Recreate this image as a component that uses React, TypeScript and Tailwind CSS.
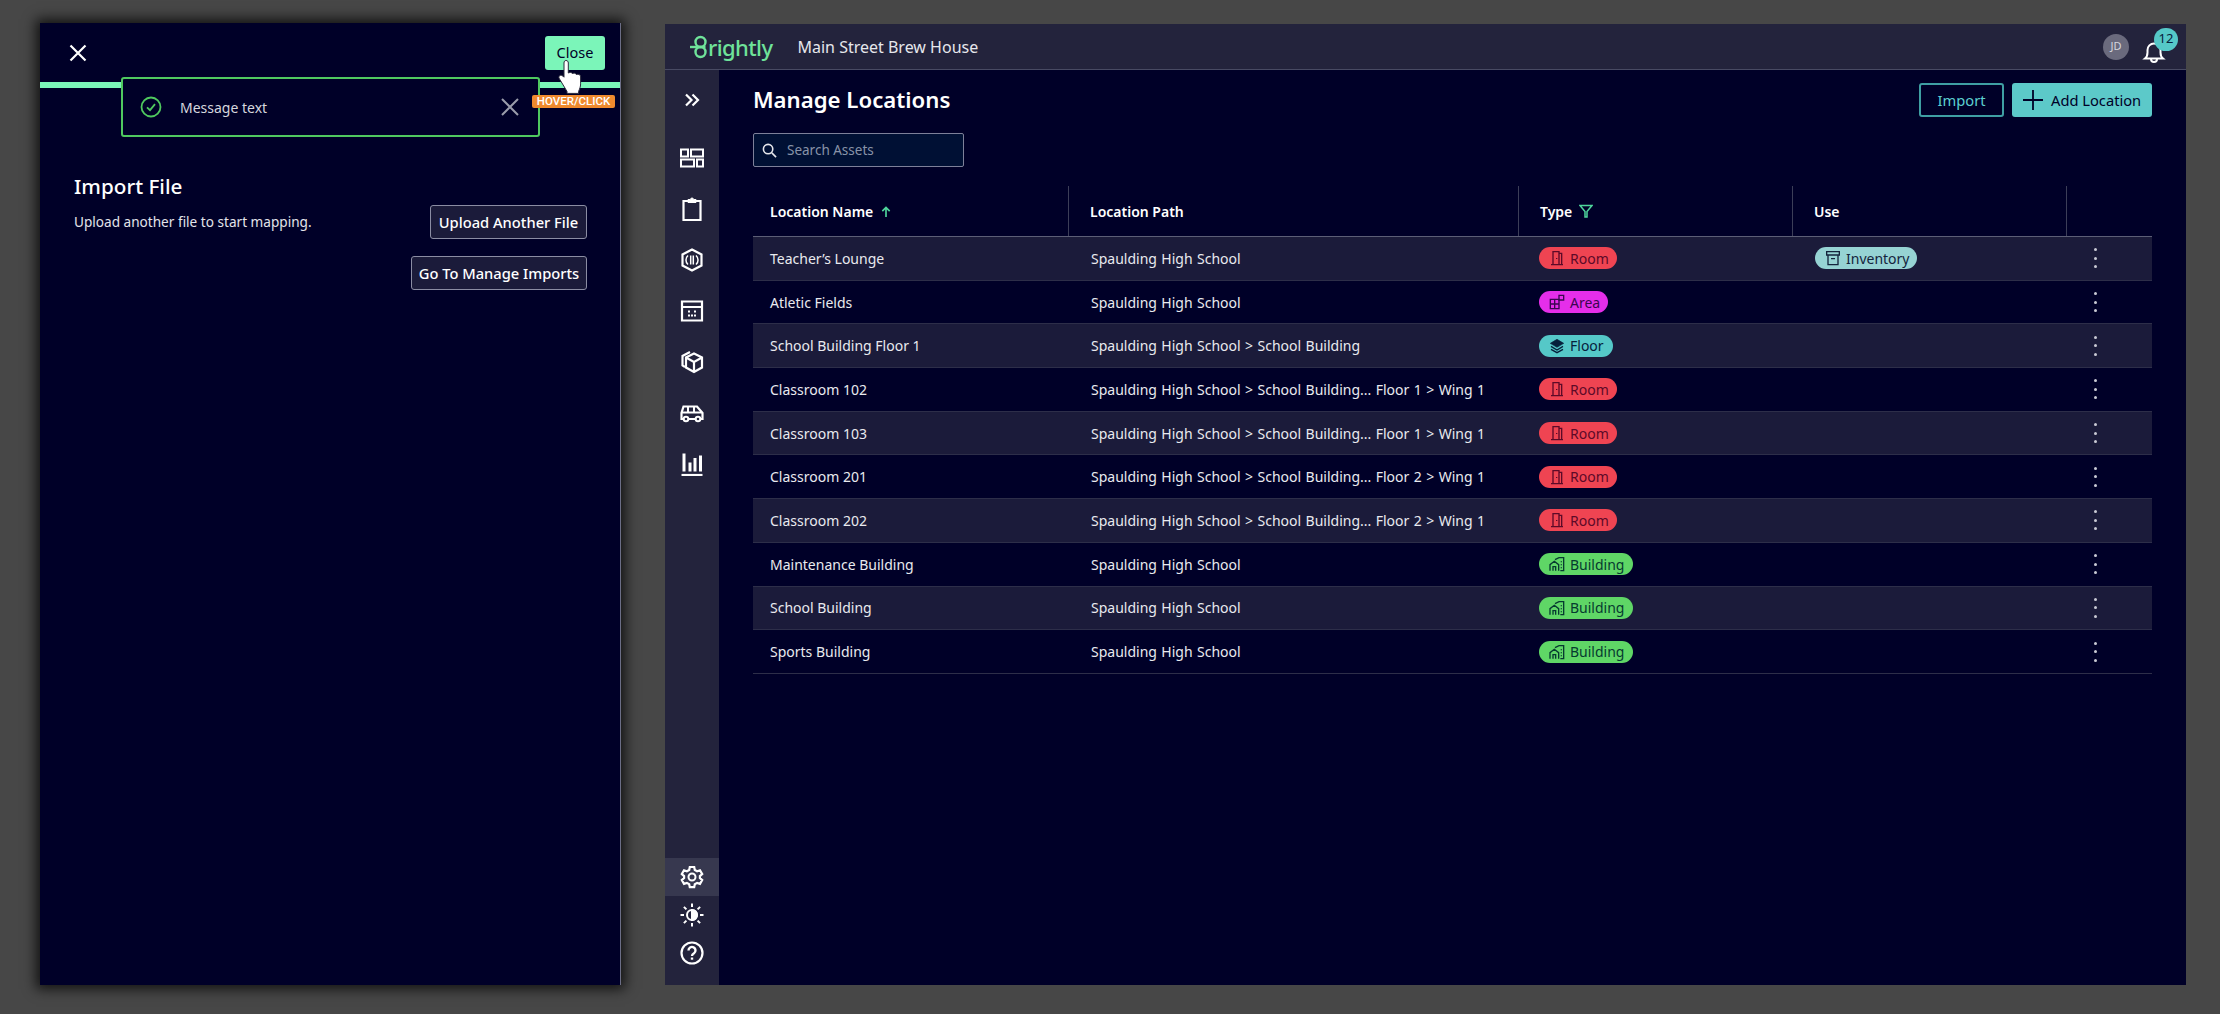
import type { ReactNode } from 'react'

type IconProps = { className?: string }

const Svg = ({ className, children }: IconProps & { children: ReactNode }) => (
  <svg viewBox="0 0 24 24" fill="none" stroke="currentColor" strokeWidth="2" className={className}>
    {children}
  </svg>
)

const DashboardIcon = ({ className }: IconProps) => (
  <Svg className={className}>
    <path d="M1 3.500h7v7H1zM11 3.500h12v7H11zM1 13.500h13v7H1zM17 13.500h6v7h-6z" strokeWidth="2" />
  </Svg>
)
const ClipboardIcon = ({ className }: IconProps) => (
  <Svg className={className}>
    <path d="M8 4H3.500v19h17V4H16" strokeWidth="2.200" />
    <path d="M8 5.500V2.500h2.500a1.500 1.500 0 0 1 3 0H16v3z" fill="currentColor" strokeWidth="1" />
  </Svg>
)
const HexIcon = ({ className }: IconProps) => (
  <Svg className={className}>
    <path d="M12 1.500 21.500 6.500v11L12 22.500 2.500 17.500v-11z" strokeWidth="2.200" />
    <path d="M8 7.500a6 6 0 0 0 0 9M16 7.500a6 6 0 0 1 0 9M10.700 7.500v9M13.300 7.500v9" strokeWidth="1.500" />
  </Svg>
)
const CalendarIcon = ({ className }: IconProps) => (
  <Svg className={className}>
    <path d="M2 2.500h20v19H2zM2 8h20" strokeWidth="2.200" />
    <path d="M8 12.500h2M14 12.500h2M8 16.500h2M14 16.500h2M11 16.500h2" strokeWidth="2" />
  </Svg>
)
const BoxIcon = ({ className }: IconProps) => (
  <Svg className={className}>
    <path d="M14 3.500 22 7.500v10l-8 4.500-8-4.500v-10zM6 7.500l8 4.500 8-4.500M14 12v10" strokeWidth="2.200" />
    <path d="M10 2 2.500 6v9.500L5 17" strokeWidth="2.200" />
  </Svg>
)
const VanIcon = ({ className }: IconProps) => (
  <Svg className={className}>
    <path d="M4 18H1.500v-6l2-6.500H17l5.500 6.500V18H20M8.500 18h7" strokeWidth="2.200" />
    <path d="M2 11.500h20M8 5.500v6M14 5.500v6" strokeWidth="2" />
    <circle cx="6" cy="18" r="2.300" />
    <circle cx="18" cy="18" r="2.300" />
  </Svg>
)
const ChartIcon = ({ className }: IconProps) => (
  <Svg className={className}>
    <path d="M1.500 23h21" strokeWidth="2.200" />
    <path d="M4 1.500v18M10 10.500v9M15 6v13.500M20.500 3.500v16" strokeWidth="3" />
  </Svg>
)
const GearIcon = ({ className }: IconProps) => (
  <Svg className={className}>
    <path d="M9.800 2h4.400l.6 3 2.300 1.300 2.900-1 2.200 3.800-2.300 2v2l2.300 2-2.200 3.800-2.900-1-2.300 1.300-.6 3H9.800l-.6-3-2.300-1.300-2.900 1-2.200-3.800 2.300-2v-2l-2.300-2L4 5.300l2.900 1 2.300-1.300z" strokeWidth="2.200" />
    <circle cx="12" cy="12" r="3.500" />
  </Svg>
)
const SunIcon = ({ className }: IconProps) => (
  <Svg className={className}>
    <circle cx="12" cy="12" r="5" />
    <path d="M12 7a5 5 0 0 1 0 10z" fill="currentColor" />
    <path d="M12 .5v3.500M12 20v3.500M.5 12H4M20 12h3.500M3.900 3.900l2.500 2.500M17.600 17.600l2.500 2.500M3.900 20.100l2.500-2.500M17.600 6.400l2.500-2.500" />
  </Svg>
)
const HelpIcon = ({ className }: IconProps) => (
  <Svg className={className}>
    <circle cx="12" cy="12" r="10.500" strokeWidth="2.200" />
    <path d="M8.500 9.500A3.500 3.500 0 1 1 14 12.300c-1.300.8-2 1.400-2 2.700" strokeWidth="2.400" />
    <path d="M12 16.500v2.200" strokeWidth="2.400" />
  </Svg>
)
const BellIcon = ({ className }: IconProps) => (
  <Svg className={className}>
    <path d="M3 18.500h18c-1.800-1.500-2.500-3-2.500-6V10a6.500 6.500 0 0 0-13 0v2.500c0 3-.7 4.500-2.500 6z" />
    <path d="M9 19a3 3 0 0 0 6 0" />
  </Svg>
)
const DoorIcon = ({ className }: IconProps) => (
  <Svg className={className}>
    <path d="M3 22h18M6 22V2.500h9V22M15 5h4v17" strokeWidth="2" />
    <path d="M11.500 12v1.500" strokeWidth="2" />
  </Svg>
)
const AreaIcon = ({ className }: IconProps) => (
  <Svg className={className}>
    <path d="M2 8h13v14H2zM2 15h13M8.500 8v14" strokeWidth="2" />
    <path d="M15 2h7v7h-7z" strokeWidth="2" />
  </Svg>
)
const LayersIcon = ({ className }: IconProps) => (
  <Svg className={className}>
    <path d="M12 2 22 8l-10 6L2 8z" fill="currentColor" strokeWidth="1" />
    <path d="m3 12.500 9 5.500 9-5.500M3 17l9 5 9-5" strokeWidth="2" />
  </Svg>
)
const BuildingIcon = ({ className }: IconProps) => (
  <Svg className={className}>
    <path d="M1.500 22V13l6.500-5 6.500 5v9M6 22v-6h4v6" strokeWidth="2" />
    <path d="M9 5.500 15 2.500h7V22h-5" strokeWidth="2" />
    <path d="M18.500 8v1.500M18.500 12.500V14M18.500 17v1.500" strokeWidth="2" />
  </Svg>
)
const ArchiveIcon = ({ className }: IconProps) => (
  <Svg className={className}>
    <path d="M2.500 2.500h19v5h-19zM4.500 7.500V22h15V7.500M9 13h6" strokeWidth="2" />
  </Svg>
)

const chips = {
  Room: { icon: DoorIcon, cls: 'bg-[#ef4452] text-[#5c0a28] w-[78px]' },
  Area: { icon: AreaIcon, cls: 'bg-[#e52eea] text-[#3a0650] w-[69px]' },
  Floor: { icon: LayersIcon, cls: 'bg-[#55c8c8] text-[#06203c] w-[74px]' },
  Building: { icon: BuildingIcon, cls: 'bg-[#5fd666] text-[#063a30] w-[94px]' },
  Inventory: { icon: ArchiveIcon, cls: 'bg-[#96d3d3] text-[#14243c] w-[102px]' },
}

const Chip = ({ name }: { name: keyof typeof chips }) => {
  const { icon: Icon, cls } = chips[name]
  return (
    <span className={`flex h-[22px] items-center gap-[5px] rounded-full pl-[10px] text-[14px] ${cls}`}>
      <Icon className="h-[16px] w-[16px] shrink-0" />
      {name}
    </span>
  )
}

const rows: { name: string; path: string; type: keyof typeof chips; use?: keyof typeof chips }[] = [
  { name: 'Teacher’s Lounge', path: 'Spaulding High School', type: 'Room', use: 'Inventory' },
  { name: 'Atletic Fields', path: 'Spaulding High School', type: 'Area' },
  { name: 'School Building Floor 1', path: 'Spaulding High School > School Building', type: 'Floor' },
  { name: 'Classroom 102', path: 'Spaulding High School > School Building... Floor 1 > Wing 1', type: 'Room' },
  { name: 'Classroom 103', path: 'Spaulding High School > School Building... Floor 1 > Wing 1', type: 'Room' },
  { name: 'Classroom 201', path: 'Spaulding High School > School Building... Floor 2 > Wing 1', type: 'Room' },
  { name: 'Classroom 202', path: 'Spaulding High School > School Building... Floor 2 > Wing 1', type: 'Room' },
  { name: 'Maintenance Building', path: 'Spaulding High School', type: 'Building' },
  { name: 'School Building', path: 'Spaulding High School', type: 'Building' },
  { name: 'Sports Building', path: 'Spaulding High School', type: 'Building' },
]

const navIcons = [DashboardIcon, ClipboardIcon, HexIcon, CalendarIcon, BoxIcon, VanIcon, ChartIcon]

const tableCols = 'grid grid-cols-[315px_450px_274px_274px_86px]'

function ImportPanel() {
  return (
    <div className="relative h-[962px] w-[581px] shrink-0 border-r border-r-[#6b6d85] bg-[#000028] text-white shadow-[0_0_12px_4px_rgba(0,0,0,0.75)]">
      <div className="flex h-[59px] items-center justify-between pl-[29px] pr-[15px]">
        <svg viewBox="0 0 18 18" fill="none" stroke="currentColor" strokeWidth="2.200" className="h-[18px] w-[18px]">
          <path d="m1.500 1.500 15 15M16.500 1.500l-15 15" />
        </svg>
        <button className="h-[34px] w-[60px] rounded-[3px] bg-[#7bf5b9] text-[14.5px] text-[#000028]">Close</button>
      </div>
      <div className="h-[6px] bg-[#7bf5b9]" />

      <div className="flex flex-col pl-[34px] pr-[33px] pt-[84px]">
        <h2 className="h-[28px] text-[20.7px] font-medium leading-[28px]">Import File</h2>
        <div className="mt-[5px] flex items-center justify-between">
          <p className="text-[13.6px] text-[#e3e4ea]">Upload another file to start mapping.</p>
          <button className="h-[34px] w-[157px] rounded-[3px] border border-[#8b8da3] bg-[#1b1b3a] text-[14.7px] font-medium">
            Upload Another File
          </button>
        </div>
        <button className="mt-[17px] h-[34px] w-[176px] self-end rounded-[3px] border border-[#8b8da3] bg-[#1b1b3a] text-[14.7px] font-medium">
          Go To Manage Imports
        </button>
      </div>

      {/* toast sits over the green bar */}
      <div className="absolute left-[81px] top-[54px] flex h-[60px] w-[419px] items-center rounded-[3px] border-2 border-[#4fc95f] bg-[#000028] pl-[17px]">
        <svg viewBox="0 0 22 22" fill="none" stroke="#4fc95f" strokeWidth="1.800" className="h-[22px] w-[22px]">
          <circle cx="11" cy="11" r="9.500" />
          <path d="m7 11.300 3 2.800 5-6" />
        </svg>
        <span className="ml-[18px] text-[14px] text-[#d5d6de]">Message text</span>
        <svg viewBox="0 0 18 18" fill="none" stroke="#9a9cab" strokeWidth="2" className="ml-auto mr-[19px] h-[18px] w-[18px]">
          <path d="m1 1 16 16M17 1 1 17" />
        </svg>
      </div>

      {/* annotation overlay: pointer and label */}
      <svg viewBox="0 0 28 36" className="absolute left-[518px] top-[36px] h-[36px] w-[28px]">
        <path
          d="M8 1.500c1.500 0 2.300 1 2.300 2.500v10l1.500-.5c1.200-.3 2 .2 2.500 1l1.500-.3c1.200-.2 2 .4 2.500 1.300l1.500-.2c1.700-.1 2.800 1 2.800 2.600v7c0 3-1 5-2 7.500v2H9v-2L1.500 20c-1-1.300-.8-2.600.2-3.300 1-.8 2.300-.4 3.300.5l1 1V4c0-1.500 .7-2.500 2-2.500z"
          fill="#fff"
          stroke="#2a2a3c"
          strokeWidth="1"
        />
      </svg>
      <span className="absolute left-[492px] top-[72px] flex h-[13px] w-[83px] items-center justify-center rounded-[2px] bg-[#ef8a2e] font-['Roboto',sans-serif] text-[11.500px] font-medium text-white">
        HOVER/CLICK
      </span>
    </div>
  )
}

function LocationsApp() {
  return (
    <div className="mt-px flex h-[961px] w-[1521px] shrink-0 flex-col bg-[#000028] text-white">
      <header className="flex h-[46px] shrink-0 items-center border-b border-b-[#484a63] bg-[#23233c] pl-[25px] pr-[20px]">
        <div className="flex items-center">
          <svg viewBox="0 0 18 24" fill="none" stroke="#6fe39a" strokeWidth="2.400" className="h-[24px] w-[18px]">
            <circle cx="10.500" cy="7" r="5" />
            <circle cx="10.500" cy="17" r="5" />
            <path d="M0 12h15.500" />
          </svg>
          <span className="text-[22px] font-medium leading-none tracking-[-0.6px] text-[#6fe39a]">rightly</span>
        </div>
        <span className="ml-[25px] text-[16px] text-[#e6e7ec]">Main Street Brew House</span>
        <div className="ml-auto flex items-center gap-[13px]">
          <span className="flex h-[26px] w-[26px] items-center justify-center rounded-full bg-[#6a6a7d] text-[11px] text-[#d5d6de]">JD</span>
          <div className="pt-[10px]">
            <div className="relative h-[24px] w-[24px]">
              <BellIcon className="h-[24px] w-[24px]" />
              <span className="absolute left-[12px] top-[-12px] flex h-[23px] w-[24px] items-center justify-center rounded-full bg-[#55c8c8] text-[13px] text-[#06203c]">
                12
              </span>
            </div>
          </div>
        </div>
      </header>

      <div className="flex min-h-0 flex-1">
        <aside className="flex w-[54px] shrink-0 flex-col justify-between bg-[#23233c] pb-[13px] pt-1">
          <div className="flex flex-col">
            <div className="mb-[7px] flex h-[51px] items-center justify-center">
              <svg viewBox="0 0 16 14" fill="none" stroke="currentColor" strokeWidth="2.200" className="h-[14px] w-[16px]">
                <path d="m2 1.500 5.500 5.500L2 12.500M8.500 1.500 14 7l-5.500 5.500" />
              </svg>
            </div>
            {navIcons.map((Icon, i) => (
              <div key={i} className="flex h-[51px] items-center justify-center">
                <Icon className="h-[24px] w-[24px]" />
              </div>
            ))}
          </div>
          <div className="flex flex-col">
            <div className="flex h-[38px] items-center justify-center bg-[#37384f]">
              <GearIcon className="h-[24px] w-[24px]" />
            </div>
            <div className="flex h-[38px] items-center justify-center">
              <SunIcon className="h-[24px] w-[24px]" />
            </div>
            <div className="flex h-[38px] items-center justify-center">
              <HelpIcon className="h-[24px] w-[24px]" />
            </div>
          </div>
        </aside>

        <main className="min-w-0 flex-1 pl-[34px] pr-[34px] pt-[13px]">
          <div className="flex h-[34px] items-center justify-between">
            <h1 className="text-[22.200px] font-semibold">Manage Locations</h1>
            <div className="flex gap-[8px]">
              <button className="h-[34px] w-[85px] rounded-[3px] border-2 border-[#3f9fa3] text-[14.7px] text-[#5cd0d0]">Import</button>
              <button className="flex h-[34px] w-[140px] items-center gap-[8px] rounded-[3px] bg-[#5cc9c9] pl-[11px] text-[14.7px] text-[#000028]">
                <svg viewBox="0 0 20 20" fill="none" stroke="currentColor" strokeWidth="1.800" className="h-[20px] w-[20px]">
                  <path d="M10 0v20M0 10h20" />
                </svg>
                Add Location
              </button>
            </div>
          </div>

          <div className="mt-[16px] flex h-[34px] w-[211px] items-center rounded-[2px] border border-[#7d8099] bg-[#001034] pl-[8px] text-[13.5px] text-[#8893a8]">
            <svg viewBox="0 0 16 16" fill="none" stroke="#e6e7ec" strokeWidth="1.700" className="h-[15px] w-[15px]">
              <circle cx="6.500" cy="6.500" r="5" />
              <path d="m10.500 10.500 4.500 4.500" />
            </svg>
            <span className="ml-[10px]">Search Assets</span>
          </div>

          <div className={`mt-[19px] h-[51px] border-b border-b-[#5c5e76] text-[14px] font-semibold ${tableCols}`}>
            <div className="flex items-center gap-[8px] pl-[17px]">
              Location Name
              <svg viewBox="0 0 10 12" fill="none" stroke="#4fd69c" strokeWidth="1.800" className="h-[11px] w-[10px]">
                <path d="M5 12V1.500M1 5.500l4-4 4 4" />
              </svg>
            </div>
            <div className="flex items-center border-l border-l-[#3c3e58] pl-[21px]">Location Path</div>
            <div className="flex items-center gap-[7px] border-l border-l-[#3c3e58] pl-[21px]">
              Type
              <svg viewBox="0 0 14 14" fill="none" stroke="#4fd69c" strokeWidth="1.500" className="h-[14px] w-[14px]">
                <path d="M1 1.500h12L8 7.500V13H6V7.500z" />
              </svg>
            </div>
            <div className="flex items-center border-l border-l-[#3c3e58] pl-[21px]">Use</div>
            <div className="border-l border-l-[#3c3e58]" />
          </div>

          {rows.map((row, i) => (
            <div
              key={row.name}
              className={`${tableCols} h-[43.7px] items-center border-b border-b-[#2d2e49] text-[14px] text-[#e9eaef] ${i % 2 === 0 ? 'bg-[#1b1b3a]' : 'bg-[#000028]'}`}
            >
              <div className="pl-[17px]">{row.name}</div>
              <div className="pl-[23px] [word-spacing:0.8px]">{row.path}</div>
              <div className="flex pl-[21px]">
                <Chip name={row.type} />
              </div>
              <div className="flex pl-[23px]">{row.use && <Chip name={row.use} />}</div>
              <div className="flex w-[58px] flex-col items-center gap-[5.500px]">
                <span className="h-[3px] w-[3px] rounded-full bg-[#c9cad4]" />
                <span className="h-[3px] w-[3px] rounded-full bg-[#c9cad4]" />
                <span className="h-[3px] w-[3px] rounded-full bg-[#c9cad4]" />
              </div>
            </div>
          ))}
        </main>
      </div>
    </div>
  )
}

export default function App() {
  return (
    <div className="flex h-[1014px] items-start gap-[44px] overflow-hidden bg-[#474747] pl-[40px] pt-[23px] font-['Noto_Sans',sans-serif]">
      <ImportPanel />
      <LocationsApp />
    </div>
  )
}
